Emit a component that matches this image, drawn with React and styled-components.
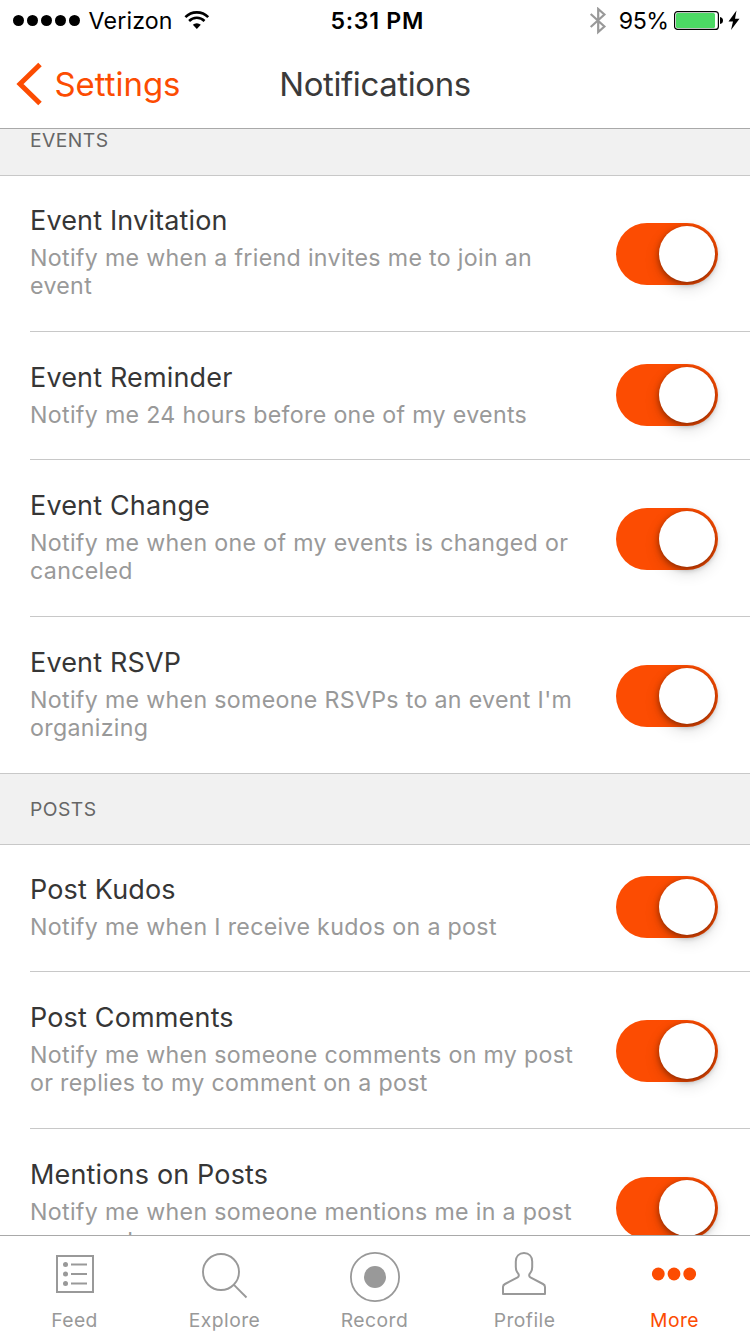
import styled, { createGlobalStyle } from "styled-components";

const GlobalStyle = createGlobalStyle`
  body {
    margin: 0;
    background: #fff;
    font-family: Inter, "Liberation Sans", sans-serif;
  }
`;
const Screen = styled.div`
  display: flex;
  flex-direction: column;
  width: 750px;
  height: 1334px;
  overflow: hidden;
  background: #fff;
`;

const StatusBar = styled.div`
  display: grid;
  grid-template-columns: 1fr auto 1fr;
  align-items: center;
  box-sizing: border-box;
  height: 40px;
  padding: 1px 10px 0 13px;
  color: #000;
  font-size: 23.2px;
  line-height: 40px;
`;
const StatusGroup = styled.div`
  display: flex;
  align-items: center;
  justify-content: ${({ $end }) => ($end ? "flex-end" : "flex-start")};
`;
const SignalDots = styled.div`
  display: flex;
  gap: 3px;
  margin: 0 8.5px 1px 0;
`;
const SignalDot = styled.span`
  width: 11px;
  height: 11px;
  border-radius: 50%;
  background: #000;
`;
const Carrier = styled.span`
  margin-right: 11px;
  letter-spacing: 0.15px;
`;
const Clock = styled.span`
  padding-left: 1.5px;
  font-weight: 600;
  letter-spacing: 0.7px;
`;
const Percent = styled.span`
  margin: 0 5.5px 0 12px;
  letter-spacing: -0.5px;
`;

const NavBar = styled.header`
  display: grid;
  grid-template-columns: 1fr auto 1fr;
  align-items: center;
  box-sizing: border-box;
  height: 89px;
  padding: 0 16px;
  border-bottom: 1px solid #a9a9a9;
  font-size: 32.9px;
  line-height: 88px;
`;
const BackButton = styled.button`
  display: flex;
  align-items: center;
  gap: 11.5px;
  padding: 0;
  border: 0;
  background: none;
  color: #fc4c02;
  font: inherit;
`;
const Title = styled.h1`
  margin: 0;
  color: #3a3a3a;
  font-size: 32.9px;
  font-weight: 400;
  letter-spacing: -0.36px;
`;

const List = styled.main`
  flex: 1;
  min-height: 0;
  overflow: hidden;
`;
const SectionHeader = styled.h2`
  box-sizing: border-box;
  height: ${({ $height }) => $height}px;
  margin: 0;
  padding: ${({ $top }) => $top}px 30px 0;
  border-bottom: 1px solid #c8c8c8;
  background: #f1f1f1;
  color: #666;
  font-size: 19.3px;
  font-weight: 400;
  letter-spacing: 0.45px;
  line-height: 22px;
`;
const Row = styled.section`
  display: flex;
  align-items: flex-start;
  justify-content: space-between;
  box-sizing: border-box;
  height: ${({ $height }) => $height}px;
  margin-left: ${({ $last }) => ($last ? 0 : 30)}px;
  padding: 0 32px 0 ${({ $last }) => ($last ? 30 : 0)}px;
  border-bottom: 1px solid #c8c8c8;
`;
const RowText = styled.div`
  width: 560px;
  padding-top: ${({ $top }) => $top}px;
`;
const RowTitle = styled.h3`
  margin: 0 0 6px;
  color: #363636;
  font-size: 27px;
  font-weight: 400;
  letter-spacing: 0.16px;
  line-height: 34px;
`;
const RowHint = styled.p`
  margin: 0;
  color: #999;
  font-size: 23.2px;
  letter-spacing: 0.32px;
  line-height: 28px;
  white-space: pre-line;
`;
const Toggle = styled.button`
  display: flex;
  flex: none;
  justify-content: flex-end;
  box-sizing: border-box;
  width: 102px;
  height: 62px;
  margin: ${({ $top }) => $top}px 0 0;
  padding: 3px;
  border: 0;
  border-radius: 31px;
  background: #fc4c02;
`;
const Thumb = styled.span`
  width: 56px;
  height: 56px;
  border-radius: 50%;
  background: #fff;
  box-shadow: 0 6px 16px rgba(0, 0, 0, 0.14), 0 2px 6px rgba(0, 0, 0, 0.4);
`;

const TabBar = styled.nav`
  display: grid;
  grid-template-columns: repeat(5, 1fr);
  box-sizing: border-box;
  height: 99px;
  border-top: 1px solid #a9a9a9;
  background: #fff;
`;
const Tab = styled.a`
  display: flex;
  flex-direction: column;
  align-items: center;
  color: ${({ $active }) => ($active ? "#fc4c02" : "#999")};
`;
const TabIcon = styled.svg`
  display: block;
  width: 60px;
  height: 60px;
  margin: 10px 0 2px;
`;
const TabLabel = styled.span`
  padding-right: 1px;
  font-size: 19.3px;
  letter-spacing: 0.45px;
  line-height: 24px;
`;

const sections = [
  {
    name: "EVENTS",
    height: 47,
    top: 0,
    rows: [
      { title: "Event Invitation", hint: "Notify me when a friend invites me to join an\nevent", height: 156, top: 28, toggleTop: 47 },
      { title: "Event Reminder", hint: "Notify me 24 hours before one of my events", height: 128, top: 29, toggleTop: 32 },
      { title: "Event Change", hint: "Notify me when one of my events is changed or\ncanceled", height: 157, top: 29, toggleTop: 48 },
      { title: "Event RSVP", hint: "Notify me when someone RSVPs to an event I'm\norganizing", height: 157, top: 29, toggleTop: 48 },
    ],
  },
  {
    name: "POSTS",
    height: 71,
    top: 24,
    rows: [
      { title: "Post Kudos", hint: "Notify me when I receive kudos on a post", height: 127, top: 28, toggleTop: 31 },
      { title: "Post Comments", hint: "Notify me when someone comments on my post\nor replies to my comment on a post", height: 157, top: 29, toggleTop: 48 },
      { title: "Mentions on Posts", hint: "Notify me when someone mentions me in a post\ncomment", height: 157, top: 29, toggleTop: 48 },
    ],
  },
];

const tabs = [
  {
    label: "Feed",
    icon: (
      <>
        <rect x="12" y="10" width="36" height="36" fill="none" stroke="currentColor" strokeWidth="2" />
        <path d="M26 18.5H42M26 28H42M26 37.5H42" stroke="currentColor" strokeWidth="2" />
        <circle cx="20.5" cy="18.5" r="2.5" fill="currentColor" />
        <circle cx="20.5" cy="28" r="2.5" fill="currentColor" />
        <circle cx="20.5" cy="37.5" r="2.5" fill="currentColor" />
      </>
    ),
  },
  {
    label: "Explore",
    icon: (
      <g fill="none" stroke="currentColor" strokeWidth="1.9">
        <circle cx="26" cy="26" r="18" />
        <path d="M38.7 38.7L51.5 51.5" />
      </g>
    ),
  },
  {
    label: "Record",
    icon: (
      <>
        <circle cx="30" cy="31" r="24.1" fill="none" stroke="currentColor" strokeWidth="1.8" />
        <circle cx="30" cy="31" r="11" fill="currentColor" />
      </>
    ),
  },
  {
    label: "Profile",
    icon: (
      <path
        d="M29 7C24 7 20.8 10.5 20.8 15.5V21C20.8 24 21.8 26 23.2 27.6C24.2 29 23.9 30.6 22.6 31.4L10 38Q8 39 8 41V48H50V41Q50 39 48 38L35.4 31.4C34.1 30.6 33.8 29 34.8 27.6C36.2 26 37.2 24 37.2 21V15.5C37.2 10.5 34 7 29 7Z"
        fill="none"
        stroke="currentColor"
        strokeWidth="2"
        strokeLinejoin="round"
      />
    ),
  },
  {
    label: "More",
    active: true,
    icon: (
      <g fill="currentColor">
        <circle cx="13.3" cy="28" r="6.4" />
        <circle cx="29" cy="28" r="6.4" />
        <circle cx="44.7" cy="28" r="6.4" />
      </g>
    ),
  },
];

function WifiIcon() {
  return (
    <svg width="26" height="20" viewBox="0 0 26 20" fill="none" stroke="#000">
      <path d="M1.4 6.1A16 16 0 0 1 24.2 6.1" strokeWidth="2.6" />
      <path d="M5.1 10A10.8 10.8 0 0 1 20.5 10" strokeWidth="2.5" />
      <path d="M12.8 18L8.8 13.8A5.7 5.7 0 0 1 16.8 13.8Z" fill="#000" stroke="none" />
    </svg>
  );
}

function BluetoothIcon() {
  return (
    <svg width="18" height="28" viewBox="0 0 18 28" fill="none" stroke="#999" strokeWidth="2.2">
      <path d="M1.7 7L15.4 19.5L9.2 25V2L15.4 7.5L1.7 20" />
    </svg>
  );
}

function BatteryIcon() {
  return (
    <svg width="66" height="22" viewBox="0 0 66 22">
      <rect x="0.6" y="1.6" width="43.8" height="17.8" rx="3" fill="#fff" stroke="#000" strokeWidth="1.2" />
      <rect x="2" y="3" width="39" height="15" rx="1.5" fill="#4cd964" />
      <path d="M46 7Q49 7.5 49 10.5T46 14Z" />
      <path d="M62.5 0.5L54.5 11.5H59L57 20L65.5 8.8H61Z" />
    </svg>
  );
}

export default function App() {
  return (
    <Screen>
      <GlobalStyle />
      <StatusBar>
        <StatusGroup>
          <SignalDots>
            {[0, 1, 2, 3, 4].map((dot) => (
              <SignalDot key={dot} />
            ))}
          </SignalDots>
          <Carrier>Verizon</Carrier>
          <WifiIcon />
        </StatusGroup>
        <Clock>5:31 PM</Clock>
        <StatusGroup $end>
          <BluetoothIcon />
          <Percent>95%</Percent>
          <BatteryIcon />
        </StatusGroup>
      </StatusBar>

      <NavBar>
        <BackButton type="button">
          <svg width="27" height="44" viewBox="0 0 27 44" fill="none">
            <path d="M24 2.5L4 22L24 41.5" stroke="currentColor" strokeWidth="5" />
          </svg>
          Settings
        </BackButton>
        <Title>Notifications</Title>
      </NavBar>

      <List>
        {sections.map(({ name, height, top, rows }) => (
          <div key={name}>
            <SectionHeader $height={height} $top={top}>
              {name}
            </SectionHeader>
            {rows.map((row, index) => (
              <Row key={row.title} $height={row.height} $last={index === rows.length - 1}>
                <RowText $top={row.top}>
                  <RowTitle>{row.title}</RowTitle>
                  <RowHint>{row.hint}</RowHint>
                </RowText>
                <Toggle
                  type="button"
                  role="switch"
                  aria-checked="true"
                  aria-label={row.title}
                  $top={row.toggleTop}
                >
                  <Thumb />
                </Toggle>
              </Row>
            ))}
          </div>
        ))}
      </List>

      <TabBar>
        {tabs.map(({ label, icon, active }) => (
          <Tab key={label} $active={active}>
            <TabIcon viewBox="0 0 60 60">{icon}</TabIcon>
            <TabLabel>{label}</TabLabel>
          </Tab>
        ))}
      </TabBar>
    </Screen>
  );
}
